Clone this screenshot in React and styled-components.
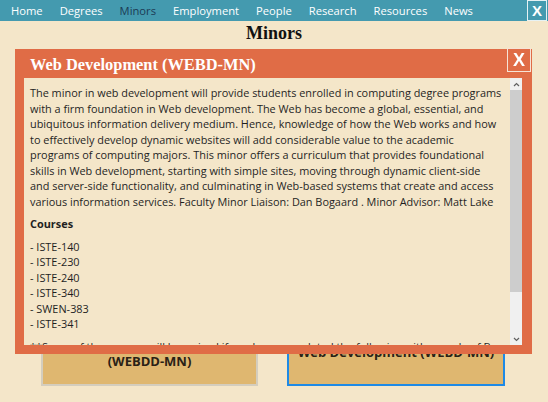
import React from "react";
import styled, { createGlobalStyle } from "styled-components";

const GlobalStyle = createGlobalStyle`
  html, body {
    margin: 0;
    height: 100%;
    overflow: hidden;
  }
  body {
    background: #f4e6c9;
    font-family: "Open Sans", "Noto Sans", sans-serif;
    color: #1f1f1f;
  }
`;

const navItems = ["Home", "Degrees", "Minors", "Employment", "People", "Research", "Resources", "News"];

const minors = [
    "Database Design and Development (DBDDI-MN)",
    "Geographic Information Systems (GIS-MN)",
    "Medical Informatics (MEDINFO-MN)",
    "Mobile Development (MOBDEV-MN)",
    "Networking and System Administration (NETSYS-MN)",
    "Web and Mobile Computing (WMC-MN)",
    "Web Design and Development (WEBDD-MN)",
    "Web Development (WEBD-MN)",
];

// 원본 화면과 같은 위치에서 줄이 바뀌도록 줄 단위로 나눔
const description = [
    "The minor in web development will provide students enrolled in computing degree programs",
    "with a firm foundation in Web development. The Web has become a global, essential, and",
    "ubiquitous information delivery medium. Hence, knowledge of how the Web works and how",
    "to effectively develop dynamic websites will add considerable value to the academic",
    "programs of computing majors. This minor offers a curriculum that provides foundational",
    "skills in Web development, starting with simple sites, moving through dynamic client-side",
    "and server-side functionality, and culminating in Web-based systems that create and access",
    "various information services. Faculty Minor Liaison: Dan Bogaard . Minor Advisor: Matt Lake",
];

const footnote = [
    "**Some of the courses will be waived if you have completed the following with a grade of B",
    "or better: ISTE-120 and ISTE-121. Students should consult with their academic advisor",
    "regarding course substitutions before declaring this minor.",
];

const courses = ["ISTE-140", "ISTE-230", "ISTE-240", "ISTE-340", "SWEN-383", "ISTE-341"];

const Lines = ({ lines }) =>
    lines.map((line, i) => (
        <React.Fragment key={i}>
            {line}
            {i < lines.length - 1 && <br />}
        </React.Fragment>
    ));

function App() {
    return (
        <>
            <GlobalStyle />
            <NavBar>
                {navItems.map((item) => (
                    <NavLink key={item} $active={item === "Minors"}>
                        {item}
                    </NavLink>
                ))}
                <NavClose>X</NavClose>
            </NavBar>

            <PageTitle>Minors</PageTitle>

            <CardGrid>
                {minors.map((name, i) => (
                    <MinorCard key={name} $focused={i === minors.length - 1}>
                        {name}
                    </MinorCard>
                ))}
            </CardGrid>

            {/* 선택한 부전공 상세 모달 */}
            <Modal>
                <ModalHeader>
                    <ModalTitle>Web Development (WEBD-MN)</ModalTitle>
                    <ModalClose>X</ModalClose>
                </ModalHeader>
                <ModalBody>
                    <ModalContent>
                        <Paragraph>
                            <Lines lines={description} />
                        </Paragraph>
                        <SectionTitle>Courses</SectionTitle>
                        <CourseList>
                            {courses.map((c) => (
                                <li key={c}>- {c}</li>
                            ))}
                        </CourseList>
                        <Paragraph>
                            <Lines lines={footnote} />
                        </Paragraph>
                    </ModalContent>
                    <ScrollBar>
                        <ScrollButton>
                            <svg width="7" height="5" viewBox="0 0 7 5">
                                <path d="M1 4l2.5-2.5L6 4" fill="none" stroke="#606060" strokeWidth="1.2" />
                            </svg>
                        </ScrollButton>
                        <ScrollTrack>
                            <ScrollThumb />
                        </ScrollTrack>
                        <ScrollButton>
                            <svg width="7" height="5" viewBox="0 0 7 5">
                                <path d="M1 1l2.5 2.5L6 1" fill="none" stroke="#606060" strokeWidth="1.2" />
                            </svg>
                        </ScrollButton>
                    </ScrollBar>
                </ModalBody>
            </Modal>
        </>
    );
}

const NavBar = styled.nav`
    display: flex;
    align-items: center;
    gap: 17px;
    height: 21px;
    padding-left: 11px;
    background: #449aaf;
`;

const NavLink = styled.span`
    font-size: 11.2px;
    line-height: 21px;
    color: ${(p) => (p.$active ? "#1c3a55" : "#ffffff")};
    cursor: pointer;
`;

const NavClose = styled.span`
    display: flex;
    align-items: center;
    justify-content: center;
    width: 18px;
    height: 19px;
    margin-left: auto;
    margin-right: 1px;
    border: 1px solid #e6f2f4;
    color: #ffffff;
    font-family: "Liberation Sans", sans-serif;
    font-weight: 700;
    font-size: 15px;
`;

const PageTitle = styled.h1`
    margin: 0;
    font-family: "Liberation Serif", serif;
    font-size: 18px;
    line-height: 24px;
    text-align: center;
    color: #111111;
`;

const CardGrid = styled.div`
    display: grid;
    grid-template-columns: 217px 218px;
    grid-auto-rows: 68px;
    gap: 20px 29px;
    margin: 9px 0 0 41px;
`;

const MinorCard = styled.div`
    display: flex;
    align-items: center;
    justify-content: center;
    box-sizing: border-box;
    background: #dfb770;
    border: 2px solid ${(p) => (p.$focused ? "#1e8ae6" : "#d4cdbd")};
    font-weight: 700;
    font-size: 13px;
    line-height: 18px;
    text-align: center;
    color: #2a2116;
`;

const Modal = styled.div`
    position: fixed;
    left: 15px;
    top: 49px;
    width: 517px;
    height: 305px;
    box-sizing: border-box;
    display: flex;
    flex-direction: column;
    padding: 0 10px 9px 9px;
    background: #e06c46;
`;

const ModalHeader = styled.div`
    position: relative;
    height: 29px;
    flex-shrink: 0;
`;

const ModalTitle = styled.h2`
    margin: 0;
    padding: 2px 0 0 6px;
    font-family: "Liberation Serif", serif;
    font-size: 16.4px;
    line-height: 27px;
    color: #ffffff;
`;

const ModalClose = styled.span`
    position: absolute;
    top: -1px;
    right: -9px;
    display: flex;
    align-items: center;
    justify-content: center;
    width: 22px;
    height: 22px;
    border: 1px solid #f6e3d6;
    color: #ffffff;
    font-family: "Liberation Sans", sans-serif;
    font-size: 18px;
    font-weight: 700;
    cursor: pointer;
`;

const ModalBody = styled.div`
    flex: 1;
    display: flex;
    min-height: 0;
    background: #f4e6c9;
`;

const ModalContent = styled.div`
    flex: 1;
    overflow: hidden;
    padding: 7px 4px 0 6px;
    font-size: 10.9px;
    line-height: 15.5px;
    white-space: nowrap;
`;

const ScrollBar = styled.div`
    display: flex;
    flex-direction: column;
    width: 12px;
    flex-shrink: 0;
    background: #f0f0f0;
`;

const ScrollButton = styled.div`
    display: flex;
    align-items: center;
    justify-content: center;
    height: 12px;
    flex-shrink: 0;
`;

const ScrollTrack = styled.div`
    flex: 1;
`;

const ScrollThumb = styled.div`
    height: 202px;
    background: #cdcdcd;
`;

const Paragraph = styled.p`
    margin: 0 0 7px;
`;

const SectionTitle = styled.h4`
    margin: 0 0 7px;
    font-size: 10.9px;
    font-weight: 700;
`;

const CourseList = styled.ul`
    margin: 0 0 7px;
    padding: 0;
    list-style: none;
`;

export default App;
